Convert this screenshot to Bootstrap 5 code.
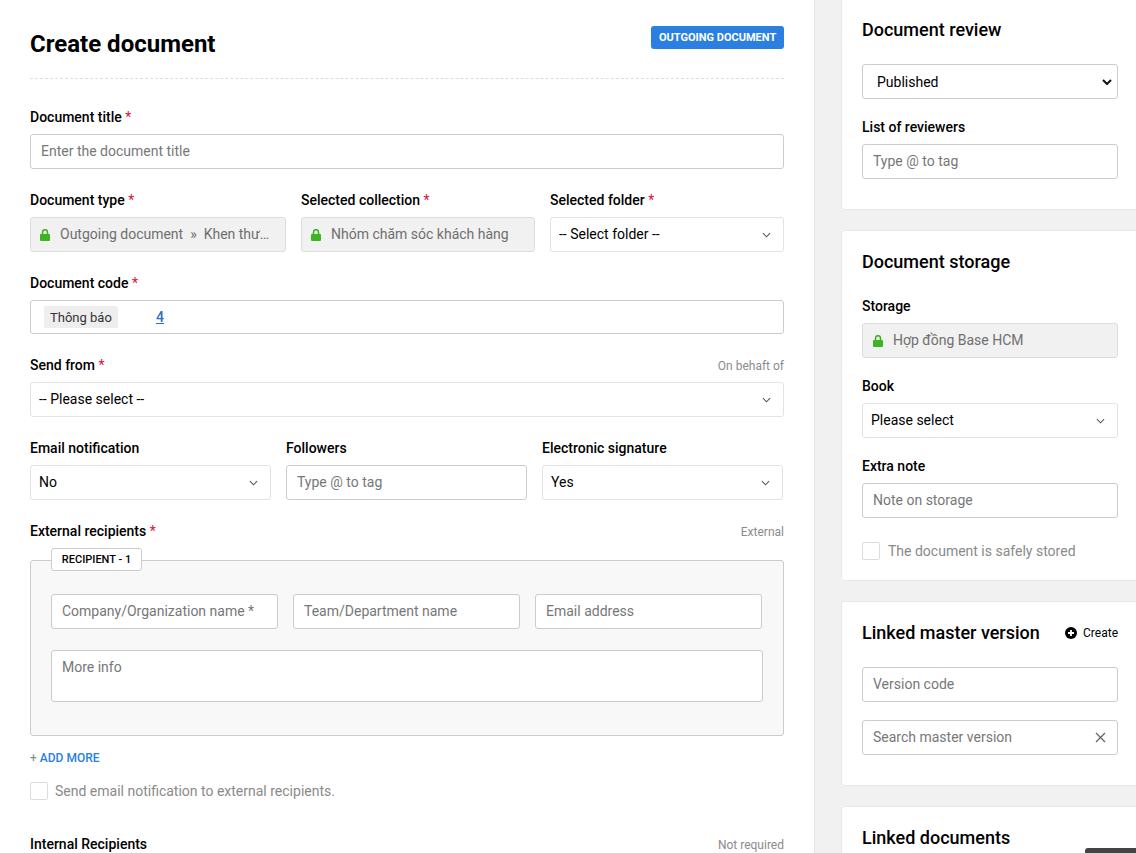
<!DOCTYPE html>
<html lang="en"><head><meta charset="utf-8"><title>Create document</title>
<link href="https://cdn.jsdelivr.net/npm/bootstrap@5.3.0/dist/css/bootstrap.min.css" rel="stylesheet">
<style>
html,body{height:853px;overflow:hidden}
body{font-family:Roboto,"Noto Sans",sans-serif;font-size:14px;color:#000;background:#f1f1f1}
.app-shell{display:flex;align-items:flex-start;width:1136px;height:853px;overflow:hidden;position:relative}
.main-pane{width:815px;flex:none;background:#fff;border-right:1px solid #e6e6e6;padding:0 30px;height:853px;overflow:hidden}
.side-pane{width:298px;flex:none;margin-left:26px;margin-top:-2px;margin-right:-3px}
.page-head{display:flex;justify-content:space-between;height:79px;border-bottom:1px dashed #ddd;margin-bottom:29px;padding-top:26px}
.page-title{font-size:24px;font-weight:700;line-height:36px;margin:0}
.type-pill{background:#2a7fe0;color:#fff;font-size:11px;font-weight:700;border-radius:3px;height:23px;line-height:23px;padding:0 8px;width:133px;text-align:center;white-space:nowrap}
.fld{margin-bottom:22px}
.fld-label{display:flex;justify-content:space-between;height:18px;line-height:18px;margin-bottom:8px;font-weight:500;font-size:14px;white-space:nowrap}
.req{color:#e0103a;font-weight:400}
.note-right{font-size:12px;font-weight:400;color:#8b8b8b;padding-top:1px}
.form-control,.form-select{font-size:14px;height:35px;border-radius:3px;border-color:#ccc;color:#000;padding:0 10px;line-height:33px}
.form-control{padding-bottom:1px}
.form-control::placeholder{color:#777;opacity:1}
.form-select.soft{border-color:#e3e3e3;padding-left:8px;background-image:url("data:image/svg+xml,%3Csvg xmlns='http://www.w3.org/2000/svg' viewBox='0 0 10 6'%3E%3Cpath d='M1 1l4 4 4-4' fill='none' stroke='%23555' stroke-width='1.2'/%3E%3C/svg%3E");background-size:9px 6px;background-position:right 12px center}
.form-select.native{padding-left:14px;padding-top:1px;background-image:url("data:image/svg+xml,%3Csvg xmlns='http://www.w3.org/2000/svg' viewBox='0 0 10 6'%3E%3Cpath d='M1 1l4 4 4-4' fill='none' stroke='%23111' stroke-width='2'/%3E%3C/svg%3E");background-size:10px 6px;background-position:right 5px center}
.locked{display:flex;align-items:center;gap:10px;background:#f1f1f1;border:1px solid #ddd;border-radius:3px;height:35px;padding:0 10px;color:#6f6f6f;min-width:0}
.main-pane .locked{padding-left:9px}
.locked span{white-space:nowrap;overflow:hidden;text-overflow:ellipsis;min-width:0}
.locked svg{flex:none}
.col-type{width:256px;flex:none}.col-coll{width:234px;flex:none}
.tri{flex:1 1 0;min-width:0}
.third{width:241px;flex:none}
.gap-15{gap:15px}
.code-box{display:flex;align-items:center;height:34px;border:1px solid #ccc;border-radius:3px;padding-left:13px;background:#fff}
.code-tag{background:#eee;border-radius:2px;height:22px;line-height:23px;padding:0 6px;width:74px;white-space:nowrap;font-size:13px;color:#333}
.code-num{margin-left:38px;color:#2a70c8;text-decoration:underline;font-weight:500;padding-top:1px}
.recip-box{position:relative;height:176px;background:#f8f8f8;border:1px solid #ccc;border-radius:3px;margin-top:20px;padding:33px 20px 0}
.recip-tag{position:absolute;top:-13px;left:20px;height:23px;line-height:21px;width:91px;text-align:center;background:#fff;border:1px solid #ccc;border-radius:3px;font-size:11px;font-weight:500;white-space:nowrap}
.recip-row{width:711px;margin-bottom:21px}
.recip-box textarea.form-control{height:52px;width:712px;resize:none;padding-top:6px;line-height:20px}
.add-line{margin-top:14px;height:16px;line-height:16px;font-size:12px;font-weight:500;color:#2a7fe0;text-transform:uppercase}
.add-line i{font-style:normal;color:#888;font-weight:400}
.tick{display:flex;align-items:center;gap:7px;color:#8a8a8a;height:18px}
.tick b{display:block;width:18px;height:18px;background:#fff;border:1px solid #ddd;border-radius:2px;flex:none}
.tick span{font-weight:400}
.tick-main{margin-top:16px;margin-bottom:35px}
.tick-side{margin-top:5px;margin-bottom:-10px;gap:8px}
.side-card{background:#fff;border:1px solid #e8e8e8;border-radius:3px;padding:20px 20px 30px;margin-bottom:20px}
.side-title{font-size:18px;font-weight:500;line-height:22px;margin:0 0 23px}
.side-title.wide-gap{margin-bottom:24px}
.side-fld{margin-bottom:19px}
.side-fld:last-child{margin-bottom:0}
.side-card .fld-label{font-weight:500;margin-bottom:8px}
.side-head{display:flex;justify-content:space-between;align-items:center;margin-bottom:23px}
.side-head .side-title{margin:0}
.create-link{display:flex;align-items:center;gap:6px;font-size:12px}
.stack-18{margin-bottom:18px}
.clear-x{position:absolute;right:12px;top:12px}
.float-chip{position:absolute;right:0;bottom:0;width:51px;height:5px;background:#444;border-radius:3px 0 0 0}
</style></head>
<body>
<div class="app-shell">
<div class="main-pane">
  <div class="page-head"><h1 class="page-title">Create document</h1><div class="type-pill">OUTGOING DOCUMENT</div></div>
  <div class="fld"><div class="fld-label"><span>Document title <span class="req">*</span></span></div><input class="form-control" placeholder="Enter the document title"></div>
  <div class="d-flex gap-15 fld">
    <div class="col-type"><div class="fld-label"><span>Document type <span class="req">*</span></span></div>
      <div class="locked"><svg width="10" height="12" viewBox="0 0 10 12"><path d="M2.5 5V3.2a2.5 2.5 0 0 1 5 0V5" fill="none" stroke="#3cb521" stroke-width="1.6"/><rect y="5" width="10" height="7" rx="1" fill="#3cb521"/></svg><span>Outgoing document &nbsp;»&nbsp; Khen thưởng nhân viên</span></div></div>
    <div class="col-coll"><div class="fld-label"><span>Selected collection <span class="req">*</span></span></div>
      <div class="locked"><svg width="10" height="12" viewBox="0 0 10 12"><path d="M2.5 5V3.2a2.5 2.5 0 0 1 5 0V5" fill="none" stroke="#3cb521" stroke-width="1.6"/><rect y="5" width="10" height="7" rx="1" fill="#3cb521"/></svg><span>Nhóm chăm sóc khách hàng</span></div></div>
    <div class="col-coll"><div class="fld-label"><span>Selected folder <span class="req">*</span></span></div>
      <select class="form-select soft"><option>-- Select folder --</option></select></div>
  </div>
  <div class="fld"><div class="fld-label"><span>Document code <span class="req">*</span></span></div>
    <div class="code-box"><span class="code-tag">Thông báo</span><span class="code-num">4</span></div></div>
  <div class="fld"><div class="fld-label"><span>Send from <span class="req">*</span></span><span class="note-right">On behaft of</span></div>
    <select class="form-select soft"><option>-- Please select --</option></select></div>
  <div class="d-flex gap-15 fld">
    <div class="third"><div class="fld-label"><span>Email notification</span></div><select class="form-select soft"><option>No</option></select></div>
    <div class="third"><div class="fld-label"><span>Followers</span></div><input class="form-control" placeholder="Type @ to tag"></div>
    <div class="third"><div class="fld-label"><span>Electronic signature</span></div><select class="form-select soft"><option>Yes</option></select></div>
  </div>
  <div class="fld-label"><span>External recipients <span class="req">*</span></span><span class="note-right">External</span></div>
  <div class="recip-box">
    <div class="recip-tag">RECIPIENT - 1</div>
    <div class="d-flex gap-15 recip-row">
      <input class="form-control tri" placeholder="Company/Organization name *">
      <input class="form-control tri" placeholder="Team/Department name">
      <input class="form-control tri" placeholder="Email address">
    </div>
    <textarea class="form-control" placeholder="More info"></textarea>
  </div>
  <div class="add-line"><i>+</i> Add more</div>
  <div class="tick tick-main"><b></b><span>Send email notification to external recipients.</span></div>
  <div class="fld-label"><span>Internal Recipients</span><span class="note-right">Not required</span></div>
</div>
<div class="side-pane">
  <div class="card side-card">
    <h2 class="side-title">Document review</h2>
    <div class="side-fld"><select class="form-select native"><option>Published</option></select></div>
    <div class="side-fld"><div class="fld-label"><span>List of reviewers</span></div><input class="form-control" placeholder="Type @ to tag"></div>
  </div>
  <div class="card side-card">
    <h2 class="side-title wide-gap">Document storage</h2>
    <div class="side-fld"><div class="fld-label"><span>Storage</span></div>
      <div class="locked"><svg width="10" height="12" viewBox="0 0 10 12"><path d="M2.5 5V3.2a2.5 2.5 0 0 1 5 0V5" fill="none" stroke="#3cb521" stroke-width="1.6"/><rect y="5" width="10" height="7" rx="1" fill="#3cb521"/></svg><span>Hợp đồng Base HCM</span></div></div>
    <div class="side-fld"><div class="fld-label"><span>Book</span></div><select class="form-select soft"><option>Please select</option></select></div>
    <div class="side-fld"><div class="fld-label"><span>Extra note</span></div><input class="form-control" placeholder="Note on storage"></div>
    <div class="tick tick-side"><b></b><span>The document is safely stored</span></div>
  </div>
  <div class="card side-card">
    <div class="side-head"><h2 class="side-title">Linked master version</h2>
      <div class="create-link"><svg width="12" height="12" viewBox="0 0 12 12"><circle cx="6" cy="6" r="6" fill="#000"/><path d="M6 3v6M3 6h6" stroke="#fff" stroke-width="1.8"/></svg>Create</div></div>
    <input class="form-control stack-18" placeholder="Version code">
    <div class="position-relative"><input class="form-control" placeholder="Search master version">
      <svg class="clear-x" width="11" height="11" viewBox="0 0 11 11"><path d="M1 1l9 9M10 1l-9 9" stroke="#666" stroke-width="1.3"/></svg></div>
  </div>
  <div class="card side-card"><h2 class="side-title">Linked documents</h2></div>
</div>
<div class="float-chip"></div>
</div>
</body></html>
